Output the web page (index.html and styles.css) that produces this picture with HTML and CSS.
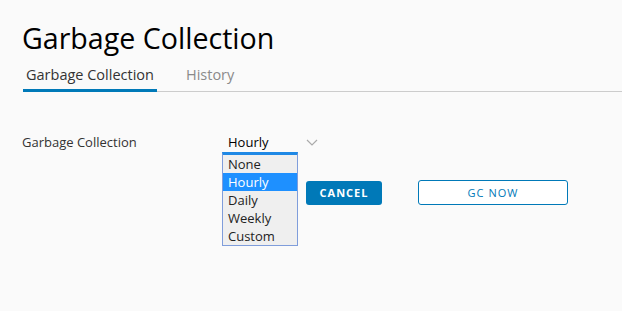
FILE: index.html
```html
<!DOCTYPE html>
<html lang="en">
<head>
    <meta charset="UTF-8">
    <title>Garbage Collection</title>
    <link rel="stylesheet" href="styles.css">
</head>
<body>
    <h1>Garbage Collection</h1>
    <nav class="tabs">
        <a class="tab active">Garbage Collection</a>
        <a class="tab">History</a>
    </nav>
    <div class="form-row">
        <label class="field-label">Garbage Collection</label>
        <div class="select-wrap">
            <div class="select">
                <span>Hourly</span>
                <svg class="chevron" width="12" height="7" viewBox="0 0 12 7">
                    <path d="M1 1 L6 6 L11 1" fill="none" stroke="#aaa" stroke-width="1.2"/>
                </svg>
            </div>
            <ul class="options">
                <li>None</li>
                <li class="selected">Hourly</li>
                <li>Daily</li>
                <li>Weekly</li>
                <li>Custom</li>
            </ul>
        </div>
    </div>
    <div class="actions">
        <button class="btn btn-primary">CANCEL</button>
        <button class="btn btn-outline">GC NOW</button>
    </div>
</body>
</html>
```
FILE: styles.css
```css
body {
    font-family: "Open Sans", sans-serif;
    background-color: #fafafa;
    color: #333;
    margin: 0;
    padding: 0 0 0 22px;
    min-height: 311px;
    box-sizing: border-box;
}
h1 {
    font-size: 28.6px;
    font-weight: 400;
    color: #000;
    margin: 0;
    padding-top: 21px;
    line-height: 34px;
}
.tabs {
    display: flex;
    border-bottom: 1px solid #ccc;
    margin-top: 10px;
    margin-left: 1px;
}
.tab {
    font-size: 14.5px;
    color: #8a8a8a;
    padding: 0 3px 4px;
    margin-right: 26px;
    line-height: 20px;
    border-bottom: 3px solid transparent;
    margin-bottom: -1px;
}
.tab.active {
    color: #333;
    border-bottom-color: #0079b8;
}
.form-row {
    display: flex;
    align-items: flex-start;
    margin-top: 41px;
}
.field-label {
    width: 200px;
    font-size: 13px;
    line-height: 18px;
}
.select-wrap {
    position: relative;
}
.select {
    display: flex;
    align-items: center;
    width: 90px;
    padding-left: 6px;
    font-size: 13px;
    line-height: 18px;
    color: #000;
}
.select span {
    flex: 1;
}
.chevron {
    display: block;
}
.options {
    position: absolute;
    top: 19px;
    left: 0;
    width: 74px;
    margin: 0;
    padding: 0;
    list-style: none;
    background: #efefef;
    border: 1px solid #7f9ddb;
    border-top: 3px solid #1e88e5;
}
.options li {
    font-size: 13px;
    line-height: 18px;
    padding: 0 5px;
    color: #222;
}
.options li.selected {
    background: #1e90ff;
    color: #fff;
}
.actions {
    display: flex;
    align-items: center;
    margin-top: 29px;
    margin-left: 284px;
    gap: 36px;
}
.btn {
    font-family: "Open Sans", sans-serif;
    font-size: 11px;
    font-weight: 700;
    letter-spacing: 1px;
    height: 24px;
    border-radius: 3px;
    padding: 0 12px;
}
.btn-primary {
    background: #0079b8;
    color: #fff;
    border: none;
    width: 76px;
}
.btn-outline {
    background: #fff;
    color: #0079b8;
    border: 1px solid #0079b8;
    width: 150px;
    height: 25px;
    font-weight: 400;
}
```
